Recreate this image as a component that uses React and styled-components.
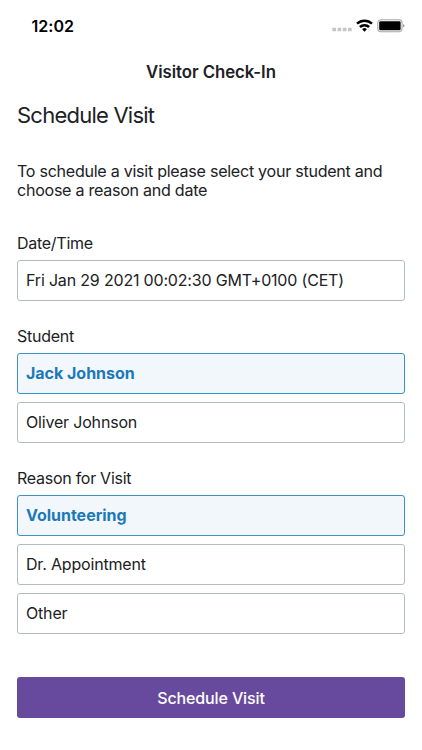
import React from 'react';
import styled, { createGlobalStyle } from 'styled-components';

const Global = createGlobalStyle`
  *{box-sizing:border-box}
  body{margin:0;background:#fff;color:#202124;font-family:Inter,"Liberation Sans",sans-serif}
`;
const Screen = styled.div`width:422px;height:750px;overflow:hidden;background:#fff;`;
const StatusBar = styled.header`
  height:52px;padding:0 17px 0 31.5px;display:flex;align-items:center;justify-content:space-between;
`;
const Clock = styled.div`font-size:16px;line-height:20px;font-weight:600;letter-spacing:.05px;color:#000;`;
const Indicators = styled.svg`display:block;width:73px;height:16px;`;
const NavTitle = styled.h1`
  margin:0;height:40px;line-height:40px;text-align:center;font-size:16.8px;font-weight:600;letter-spacing:-.06px;
`;
const Form = styled.main`padding:9px 17px 0;display:flex;flex-direction:column;`;
const Heading = styled.h2`margin:0;font-size:22px;line-height:28px;font-weight:400;letter-spacing:-.77px;`;
const Intro = styled.p`margin:33px 0 33px;font-size:16.1px;line-height:19px;letter-spacing:-.28px;white-space:nowrap;`;
const Group = styled.section`display:flex;flex-direction:column;gap:7px;margin-bottom:25px;`;
const Options = styled.div`display:flex;flex-direction:column;gap:8px;`;
const Label = styled.div`font-size:16px;line-height:20px;letter-spacing:-.27px;`;
const Option = styled.div`
  height:41px;padding:0 8px 2px;display:flex;align-items:center;border-radius:3px;font-size:16px;white-space:nowrap;
  border:1px solid ${p => p.$on ? '#3b92c4' : '#b3bcc4'};
  background:${p => p.$on ? '#f2f7fc' : '#fff'};
  color:${p => p.$on ? '#1c79b8' : '#202124'};
  font-weight:${p => p.$on ? 700 : 400};
  letter-spacing:${p => p.$on ? '-.02px' : '-.18px'};
`;
const Submit = styled.button`
  height:41px;margin-top:18px;padding:0;border:0;border-radius:3px;background:#674a9e;color:#fff;
  font:500 16px Inter,"Liberation Sans",sans-serif;letter-spacing:-.13px;
`;

function StatusIcons() {
  return (
    <Indicators viewBox="0 0 73 16">
      <g fill="#c5c5c7">
        <rect x=".4" y="9.8" width="3.6" height="3.4" rx=".5" />
        <rect x="5.6" y="9.8" width="3.6" height="3.4" rx=".5" />
        <rect x="10.8" y="9.8" width="3.6" height="3.4" rx=".5" />
        <rect x="16" y="9.8" width="3.6" height="3.4" rx=".5" />
      </g>
      <g fill="none" stroke="#000" strokeWidth="2.5">
        <path d="M25 5.7a10.8 10.8 0 0 1 15 0" />
        <path d="M27.9 9a6.6 6.6 0 0 1 9.2 0" />
      </g>
      <path d="M32.5 13.7 30.1 11.3a3.4 3.4 0 0 1 4.8 0Z" fill="#000" />
      <rect x="45.8" y="1.8" width="24.2" height="11.9" rx="3.2" fill="none" stroke="#a9a9a9" strokeWidth="1.1" />
      <rect x="47.2" y="3.2" width="21.4" height="9.1" rx="1.4" fill="#000" />
      <path d="M71.2 5.9c1.8.7 1.8 2.9 0 3.6Z" fill="#8e8e8e" />
    </Indicators>
  );
}

export default function App() {
  return (
    <Screen>
      <Global />
      <StatusBar>
        <Clock>12:02</Clock>
        <StatusIcons />
      </StatusBar>
      <NavTitle>Visitor Check-In</NavTitle>
      <Form>
        <Heading>Schedule Visit</Heading>
        <Intro>To schedule a visit please select your student and<br />choose a reason and date</Intro>
        <Group>
          <Label>Date/Time</Label>
          <Option>Fri Jan 29 2021 00:02:30 GMT+0100 (CET)</Option>
        </Group>
        <Group>
          <Label>Student</Label>
          <Options>
            <Option $on>Jack Johnson</Option>
            <Option>Oliver Johnson</Option>
          </Options>
        </Group>
        <Group>
          <Label>Reason for Visit</Label>
          <Options>
            <Option $on>Volunteering</Option>
            <Option>Dr. Appointment</Option>
            <Option>Other</Option>
          </Options>
        </Group>
        <Submit>Schedule Visit</Submit>
      </Form>
    </Screen>
  );
}
